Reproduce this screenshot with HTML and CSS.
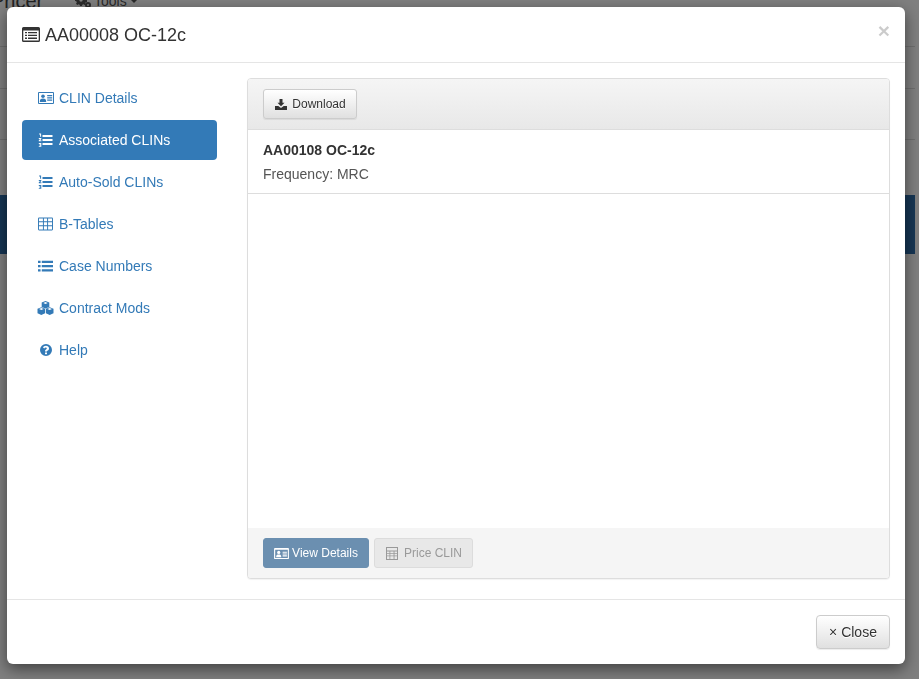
FILE: index.html
```html
<!DOCTYPE html>
<html lang="en">
<head>
<meta charset="utf-8">
<title>AA00008 OC-12c</title>
<link rel="stylesheet" href="styles.css">
</head>
<body>
<svg class="sprite" aria-hidden="true">
  <symbol id="i-card" viewBox="0 0 16 14">
    <path fill-rule="evenodd" d="M1 1h14a1 1 0 0 1 1 1v10a1 1 0 0 1-1 1H1a1 1 0 0 1-1-1V2a1 1 0 0 1 1-1zm0 1v10h14V2z"/>
    <circle cx="5" cy="5.300" r="1.800"/>
    <path d="M1.800 11c0-2.700 1-3.500 3.200-3.500s3.200.8 3.200 3.500zM9.200 4h5v1.200h-5zM9.200 6.300h5v1.200h-5zM9.200 8.600h5v1.200h-5z"/>
  </symbol>
  <symbol id="i-card-solid" viewBox="0 0 16 14">
    <path fill-rule="evenodd" d="M1 1h14a1 1 0 0 1 1 1v10a1 1 0 0 1-1 1H1a1 1 0 0 1-1-1V2a1 1 0 0 1 1-1zm.2 2v8.800h13.600V3z"/>
    <circle cx="5" cy="5.800" r="1.700"/>
    <path d="M2.200 11c0-2.400 1-3 2.800-3s2.800.6 2.800 3zM9.200 5h4.600v1.200H9.200zM9.200 7h4.600v1.200H9.200zM9.200 9h4.600v1.200H9.200z"/>
  </symbol>
  <symbol id="i-list-ol" viewBox="0 0 14 14">
    <path d="M4 2h10v2H4zM4 6h10v2H4zM4 10h10v2H4z"/>
    <path d="M.6 .4h2v3.400h-1V1.400h-1zM.3 5h2.500v1L1.500 7.200h1.400v1H.3V7.300L1.600 6H.3zM.3 10h2.500v3.800H.3v-.9h1.500v-.5H.9v-.8h.9v-.6H.3z"/>
  </symbol>
  <symbol id="i-list" viewBox="0 0 14 12">
    <path d="M0 1h2.400v2.200H0zM0 5h2.400v2.200H0zM0 9h2.400v2.200H0zM3.500 1H14v2.200H3.500zM3.500 5H14v2.200H3.500zM3.500 9H14v2.200H3.500z"/>
  </symbol>
  <symbol id="i-table" viewBox="0 0 14 12">
    <path fill-rule="evenodd" d="M1 0h12a1 1 0 0 1 1 1v10a1 1 0 0 1-1 1H1a1 1 0 0 1-1-1V1a1 1 0 0 1 1-1zM.9 .9v2.600h3.700V.9zm4.600 0v2.600h3V.9zm3.900 0v2.600h3.700V.9zM.9 4.400v2.800h3.700V4.400zm4.600 0v2.800h3V4.400zm3.900 0v2.800h3.700V4.400zM.9 8.100v3h3.700v-3zm4.600 0v3h3v-3zm3.900 0v3h3.700v-3z"/>
  </symbol>
  <symbol id="i-cubes" viewBox="0 0 17 14">
    <path fill-rule="evenodd" d="M8.500 0l3.800 1.500v4.400L8.500 7.400 4.700 5.900V1.500zM6.300 2l2.200.9 2.200-.9-2.200-.9zM4.300 6.300l3.800 1.500v4.400L4.300 14 .5 12.200V7.800zM2 8l2.300.9L6.600 8l-2.300-.9zM12.700 6.300l3.800 1.500v4.400L12.700 14l-3.800-1.800V7.800zM10.400 8l2.300.9L15 8l-2.300-.9z"/>
  </symbol>
  <symbol id="i-help" viewBox="0 0 12 12">
    <path fill-rule="evenodd" d="M6 0a6 6 0 1 1 0 12A6 6 0 0 1 6 0zM5 8.500v1.800h2V8.500zM6 1.800C4.500 1.800 3.500 2.500 3 3.600l1.300 1c.4-.7.800-1 1.500-1 .6 0 1 .3 1 .8 0 .4-.3.700-.9 1C5.300 5.800 5 6.300 5 7v.6h2c0-.5.100-.8.700-1.100C8.500 6 9 5.400 9 4.400 9 2.800 7.600 1.800 6 1.800z"/>
  </symbol>
  <symbol id="i-download" viewBox="0 0 12 11">
    <path d="M4.500 0h3v3.800h2L6 7.300 2.500 3.800h2zM0 7h3.300L6 9l2.700-2H12v4H0z"/>
  </symbol>
  <symbol id="i-calc" viewBox="0 0 12 13">
    <path fill-rule="evenodd" d="M0 0h12v13H0zm1 1v2.500h10V1zm0 3.500V6h2.500V4.500zm3.300 0V6h3.300V4.500zm4.200 0V6H11V4.500zM1 6.800v1.700h2.500V6.800zm3.300 0v1.700h3.300V6.800zm4.200 0v1.700H11V6.800zM1 9.300V12h2.500V9.300zm3.300 0V12h3.300V9.300zm4.200 0V12H11V9.300z"/>
  </symbol>
  <symbol id="i-listalt" viewBox="0 0 18 15">
    <path fill-rule="evenodd" d="M1.500 0h15A1.500 1.500 0 0 1 18 1.500v12a1.500 1.500 0 0 1-1.500 1.500h-15A1.500 1.500 0 0 1 0 13.500v-12A1.500 1.500 0 0 1 1.500 0zM1.300 3.500v10h15.400v-10zM3 5h2v1.300H3zM3 7.800h2v1.300H3zM3 10.600h2v1.300H3zM6 5h9v1.300H6zM6 7.800h9v1.300H6zM6 10.600h9v1.300H6z"/>
  </symbol>
  <symbol id="i-gears" viewBox="0 0 16 14">
    <path fill-rule="evenodd" d="M5 1h2l.3 1.300 1.200.5L9.700 2l1.300 1.300-.8 1.200.5 1.200 1.300.3v2l-1.300.3-.5 1.200.8 1.200L9.700 11l-1.200-.8-1.200.5L7 12H5l-.3-1.300-1.200-.5-1.200.8L1 9.700l.8-1.200-.5-1.200L0 7V5l1.300-.3.500-1.200L1 2.300 2.300 1l1.200.8 1.200-.5zM6 4.300a1.700 1.700 0 1 0 0 3.400 1.700 1.700 0 0 0 0-3.400z"/>
    <path fill-rule="evenodd" d="M13 8a3 3 0 1 1 0 6 3 3 0 0 1 0-6zm0 2a1 1 0 1 0 0 2 1 1 0 0 0 0-2z"/>
  </symbol>
</svg>

<div class="page">
  <header class="topbar">
    <span class="brand">Pricer</span>
    <span class="tools"><svg class="gears"><use href="#i-gears"/></svg>Tools <span class="caret"></span></span>
  </header>
  <div class="rule-a"></div>
  <div class="rule-b"></div>
  <div class="band"></div>
</div>

<div class="overlay"></div>

<div class="modal" role="dialog">
  <div class="modal-header">
    <h4 class="modal-title"><svg class="title-icon"><use href="#i-listalt"/></svg>AA00008 OC-12c</h4>
    <span class="dismiss">×</span>
  </div>
  <div class="modal-body">
    <ul class="pills">
      <li class="pill"><svg class="ico ico-card"><use href="#i-card"/></svg>CLIN Details</li>
      <li class="pill active"><svg class="ico"><use href="#i-list-ol"/></svg>Associated CLINs</li>
      <li class="pill"><svg class="ico"><use href="#i-list-ol"/></svg>Auto-Sold CLINs</li>
      <li class="pill"><svg class="ico"><use href="#i-table"/></svg>B-Tables</li>
      <li class="pill"><svg class="ico"><use href="#i-list"/></svg>Case Numbers</li>
      <li class="pill"><svg class="ico ico-cubes"><use href="#i-cubes"/></svg>Contract Mods</li>
      <li class="pill"><svg class="ico ico-help"><use href="#i-help"/></svg>Help</li>
    </ul>
    <section class="panel">
      <div class="panel-heading">
        <button class="btn btn-sm" type="button"><svg class="btn-ico"><use href="#i-download"/></svg>Download</button>
      </div>
      <div class="list">
        <div class="list-item">
          <div class="item-title">AA00108 OC-12c</div>
          <div class="item-meta">Frequency: MRC</div>
        </div>
      </div>
      <div class="panel-footer">
        <button class="btn-primary" type="button"><svg class="btn-ico-card"><use href="#i-card-solid"/></svg>View Details</button>
        <button class="btn-disabled" type="button"><svg class="btn-ico-calc"><use href="#i-calc"/></svg>Price CLIN</button>
      </div>
    </section>
  </div>
  <div class="modal-footer">
    <button class="btn btn-close" type="button">× Close</button>
  </div>
</div>
</body>
</html>
```

FILE: styles.css
```css
* { box-sizing: border-box; }
html, body { margin: 0; height: 100%; }
body {
  font-family: "Liberation Sans", Arial, sans-serif;
  font-size: 14px;
  line-height: 20px;
  color: #333;
  background: #fff;
  overflow: hidden;
}
.sprite { position: absolute; width: 0; height: 0; }

/* page behind the dialog */
.page { width: 915px; height: 679px; overflow: hidden; }
.topbar {
  height: 47px;
  margin-top: -11px;
  display: flex;
  align-items: flex-start;
  color: #444;
  border-bottom: 1px solid #ddd;
  height: 58px;
}
.brand { font-size: 20px; margin-left: -9px; line-height: 24px; width: 84px; }
.tools { font-size: 14px; display: flex; align-items: center; line-height: 24px; color: #555; }
.gears { width: 16px; height: 14px; margin-right: 3px; fill: #555; }
.caret {
  display: inline-block; margin-left: 3px; width: 0; height: 0;
  border-top: 4px solid #555; border-left: 4px solid transparent; border-right: 4px solid transparent;
}
.rule-a { height: 42px; border-bottom: 1px solid #ddd; }
.rule-b { height: 51px; border-bottom: 1px solid #ddd; }
.band {
  margin-top: 55px;
  height: 59px;
  background: #2c6ca8;
}
.overlay { position: fixed; inset: 0; background: rgba(0,0,0,.5); }

/* dialog */
.modal {
  position: fixed;
  left: 7px; top: 7px;
  width: 898px; height: 657px;
  background: #fff;
  border-radius: 6px;
  box-shadow: 0 5px 15px rgba(0,0,0,.5);
  display: flex;
  flex-direction: column;
}
.modal-header {
  height: 56px;
  flex: none;
  padding: 15px;
  border-bottom: 1px solid #e5e5e5;
  display: flex;
  justify-content: space-between;
}
.modal-title {
  margin: 0;
  font-size: 18px;
  font-weight: 400;
  line-height: 24px;
  color: #333;
  display: flex;
  align-items: center;
}
.title-icon { width: 18px; height: 15px; margin-right: 5px; fill: #333; }
.dismiss {
  font-size: 21px;
  font-weight: 700;
  line-height: 16px;
  color: #000;
  opacity: .2;
  margin-top: 1px;
}
.modal-body {
  flex: 1;
  display: flex;
  padding: 15px;
  gap: 30px;
  min-height: 0;
}
.pills {
  list-style: none;
  margin: 0; padding: 0;
  width: 195px;
  flex: none;
  display: flex;
  flex-direction: column;
  gap: 2px;
}
.pill {
  height: 40px;
  padding: 10px 15px;
  border-radius: 4px;
  color: #337ab7;
  display: flex;
  align-items: center;
  white-space: nowrap;
}
.pill.active { background: #337ab7; color: #fff; }
.ico { width: 15px; height: 14px; margin: 0 6px 0 1px; fill: currentColor; flex: none; }
.ico-card { width: 16px; margin: 0 5px 0 1px; }
.ico-cubes { width: 17px; margin: 0 5px 0 0; }
.ico-help { width: 12px; height: 12px; margin: 0 7px 0 3px; }

.panel {
  flex: 1;
  display: flex;
  flex-direction: column;
  border: 1px solid #ddd;
  border-radius: 4px;
  box-shadow: 0 1px 1px rgba(0,0,0,.05);
  background: #fff;
  height: 501px;
  min-width: 0;
}
.panel-heading {
  height: 51px;
  flex: none;
  padding: 10px 15px;
  background: linear-gradient(#f5f5f5, #e8e8e8);
  border-bottom: 1px solid #ddd;
  border-radius: 3px 3px 0 0;
}
.btn {
  font-family: inherit;
  color: #333;
  border: 1px solid #ccc;
  border-radius: 3px;
  background: linear-gradient(#fff, #e0e0e0);
  box-shadow: inset 0 1px 0 rgba(255,255,255,.15), 0 1px 1px rgba(0,0,0,.075);
  display: inline-flex;
  align-items: center;
  justify-content: center;
  padding: 0;
  text-shadow: 0 1px 0 #fff;
}
.btn-sm { width: 94px; height: 30px; font-size: 12px; line-height: 18px; padding-left: 1px; }
.btn-ico { width: 12px; height: 11px; margin-right: 5px; fill: #333; }
.list { flex: 1; min-height: 0; }
.list-item { height: 64px; padding: 10px 15px; border-bottom: 1px solid #ddd; }
.item-title { font-weight: 700; line-height: 20px; color: #333; }
.item-meta { margin-top: 4px; line-height: 20px; color: #555; }
.panel-footer {
  height: 50px;
  flex: none;
  padding: 10px 15px;
  background: #f5f5f5;
  border-radius: 0 0 3px 3px;
  display: flex;
  gap: 5px;
}
.btn-primary, .btn-disabled {
  font-family: inherit;
  font-size: 12px;
  height: 30px;
  border-radius: 3px;
  display: inline-flex;
  align-items: center;
  justify-content: center;
  padding: 0;
}
.btn-primary {
  width: 106px;
  color: #fff;
  background: #6b8fb0;
  border: 1px solid #6b8fb0;
}
.btn-disabled {
  width: 99px;
  color: #9a9a9a;
  background: #e8e8e8;
  border: 1px solid #dcdcdc;
  padding-left: 1px;
}
.btn-ico-card { width: 15px; height: 13px; margin-right: 3px; fill: #fff; }
.btn-ico-calc { width: 12px; height: 13px; margin-right: 6px; fill: #999; }
.modal-footer {
  height: 65px;
  flex: none;
  border-top: 1px solid #e5e5e5;
  padding: 15px;
  display: flex;
  justify-content: flex-end;
}
.btn-close { width: 74px; height: 34px; font-size: 14px; border-radius: 4px; }
```
